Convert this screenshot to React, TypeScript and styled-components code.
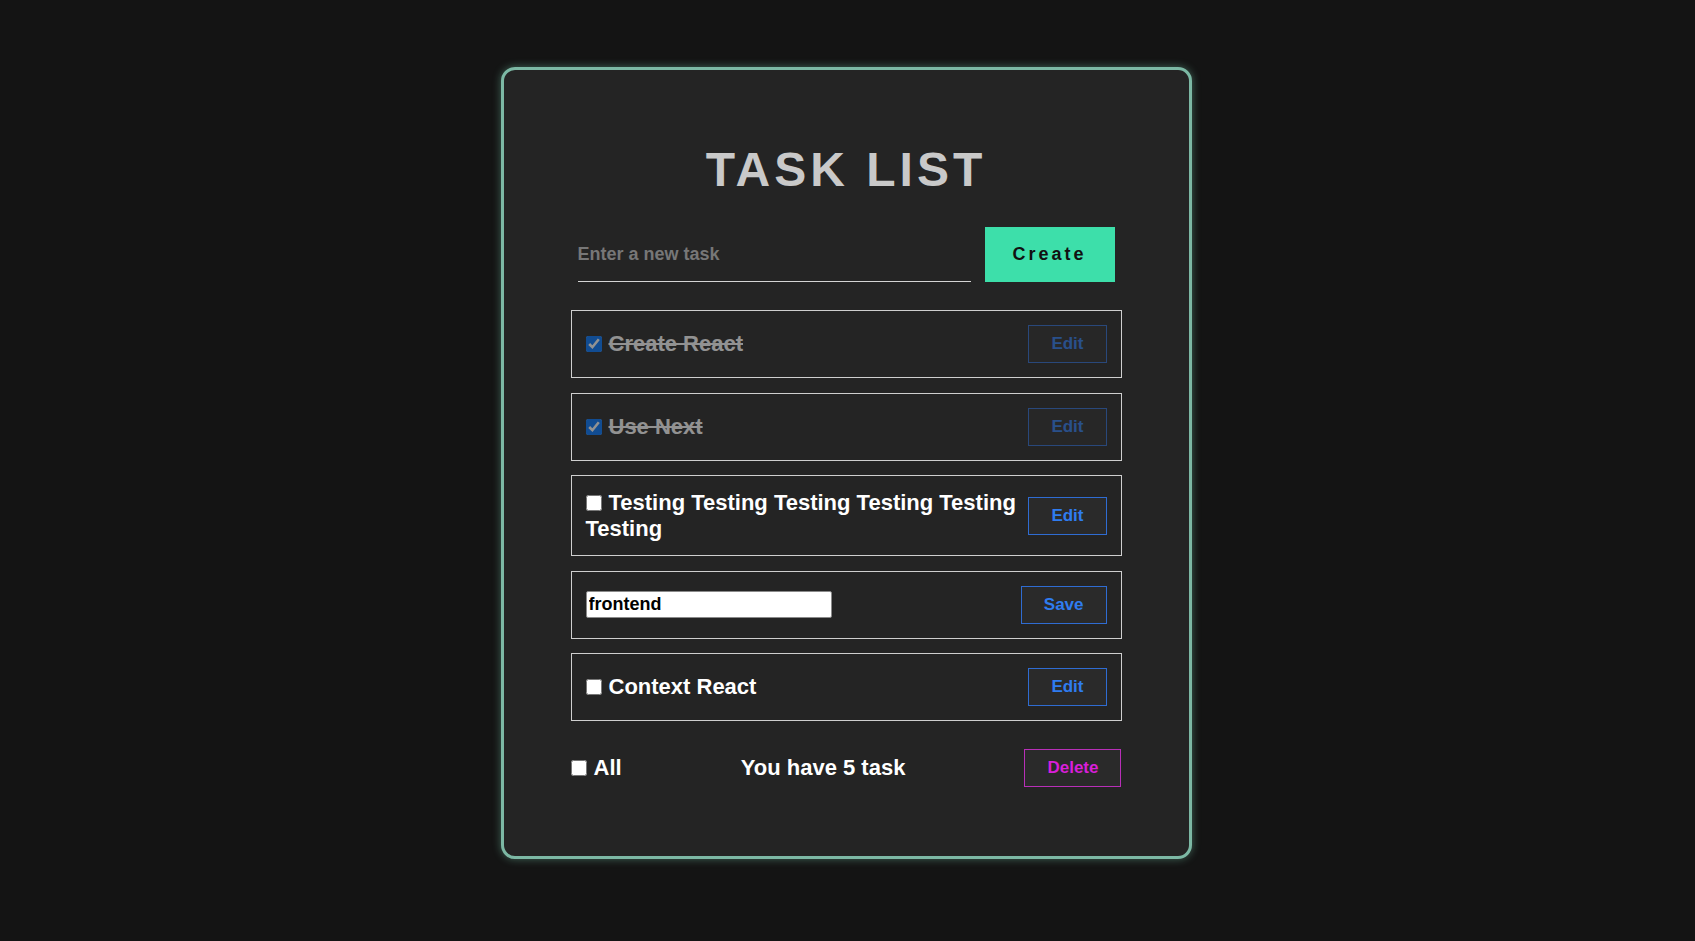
import React from "react";
import styled, { createGlobalStyle } from "styled-components";

const GlobalStyle = createGlobalStyle`
  html, body {
    margin: 0;
    padding: 0;
    background: #141414;
    font-family: "Liberation Sans", Arial, sans-serif;
  }
  * { box-sizing: border-box; }
`;

const Page = styled.div`
  min-height: 100vh;
  display: flex;
  justify-content: center;
  align-items: flex-start;
  padding: 67px 3px 0 0;
`;

const Card = styled.div`
  width: 691px;
  background: #242424;
  border: 3px solid #7cb8a4;
  border-radius: 14px;
  box-shadow: 0 0 9px rgba(120, 200, 170, 0.45);
  padding: 72px 67px 69px;
  display: flex;
  flex-direction: column;
`;

const Title = styled.h1`
  margin: 0;
  text-align: center;
  font-size: 48px;
  line-height: 55px;
  font-weight: 700;
  letter-spacing: 4px;
  color: #c9c9c9;
`;

const InputRow = styled.div`
  display: flex;
  gap: 14px;
  margin-top: 30px;
  padding: 0 7px;
  height: 55px;
`;

const NewTaskInput = styled.input`
  flex: 1;
  background: transparent;
  border: none;
  border-bottom: 1px solid #d4d4d4;
  outline: none;
  padding: 0;
  font-family: inherit;
  font-size: 18px;
  font-weight: 700;
  color: #fff;
  &::placeholder {
    color: #777;
  }
`;

const CreateButton = styled.button`
  width: 130px;
  border: none;
  background: #3ddfaa;
  color: #111;
  font-family: inherit;
  font-size: 18px;
  font-weight: 700;
  letter-spacing: 3px;
  cursor: pointer;
`;

const List = styled.ul`
  list-style: none;
  margin: 28px 0 0;
  padding: 0;
  display: flex;
  flex-direction: column;
  gap: 14.5px;
`;

const Row = styled.li`
  display: flex;
  align-items: center;
  justify-content: space-between;
  border: 1px solid #cfcfcf;
  padding: 14px;
  min-height: 68px;
`;

const TaskLabel = styled.label<{ $done?: boolean }>`
  flex: 1;
  font-size: 22px;
  font-weight: 700;
  line-height: 25.5px;
  color: #fff;
  text-decoration: ${(p) => (p.$done ? "line-through" : "none")};
  opacity: ${(p) => (p.$done ? 0.5 : 1)};
`;

const Check = styled.input.attrs({ type: "checkbox" })`
  width: 16px;
  height: 16px;
  margin: 0 7px 0 0;
  vertical-align: -1px;
  accent-color: #0075ff;
`;

const OutlineButton = styled.button<{ $tone: "blue" | "pink"; $dim?: boolean }>`
  height: 38px;
  padding: 0 22px;
  background: #2a2a2a;
  border: 1px solid ${(p) => (p.$tone === "pink" ? "#b82fb8" : "#2f6cd2")};
  color: ${(p) => (p.$tone === "pink" ? "#d91fd9" : "#2f7cf0")};
  font-family: inherit;
  font-size: 17px;
  font-weight: 700;
  opacity: ${(p) => (p.$dim ? 0.5 : 1)};
  cursor: pointer;
  flex-shrink: 0;
`;

const EditInput = styled.input`
  width: 246px;
  height: 27px;
  background: #fff;
  border: 1px solid #8a8a8a;
  border-radius: 2px;
  padding: 0 2px;
  font-family: inherit;
  font-size: 18px;
  font-weight: 700;
  color: #000;
  outline: none;
`;

const Footer = styled.div`
  display: flex;
  align-items: center;
  justify-content: space-between;
  margin-top: 28px;
`;

const FooterText = styled.span`
  font-size: 22px;
  font-weight: 700;
  color: #fff;
`;

const AllLabel = styled.label`
  font-size: 22px;
  font-weight: 700;
  color: #fff;
`;

type Task = { id: number; text: string; done: boolean; editing?: boolean };

const tasks: Task[] = [
  { id: 1, text: "Create React", done: true },
  { id: 2, text: "Use Next", done: true },
  { id: 3, text: "Testing Testing Testing Testing Testing Testing", done: false },
  { id: 4, text: "frontend", done: false, editing: true },
  { id: 5, text: "Context React", done: false },
];

export default function App() {
  return (
    <>
      <GlobalStyle />
      <Page>
        <Card>
          <Title>TASK LIST</Title>
          <InputRow>
            <NewTaskInput placeholder="Enter a new task" />
            <CreateButton>Create</CreateButton>
          </InputRow>
          <List>
            {tasks.map((t) =>
              t.editing ? (
                <Row key={t.id}>
                  <EditInput defaultValue={t.text} />
                  <OutlineButton $tone="blue">Save</OutlineButton>
                </Row>
              ) : (
                <Row key={t.id}>
                  <TaskLabel $done={t.done}>
                    <Check defaultChecked={t.done} />
                    {t.text}
                  </TaskLabel>
                  <OutlineButton $tone="blue" $dim={t.done}>
                    Edit
                  </OutlineButton>
                </Row>
              )
            )}
          </List>
          <Footer>
            <AllLabel>
              <Check />
              All
            </AllLabel>
            <FooterText>You have 5 task</FooterText>
            <OutlineButton $tone="pink">Delete</OutlineButton>
          </Footer>
        </Card>
      </Page>
    </>
  );
}
